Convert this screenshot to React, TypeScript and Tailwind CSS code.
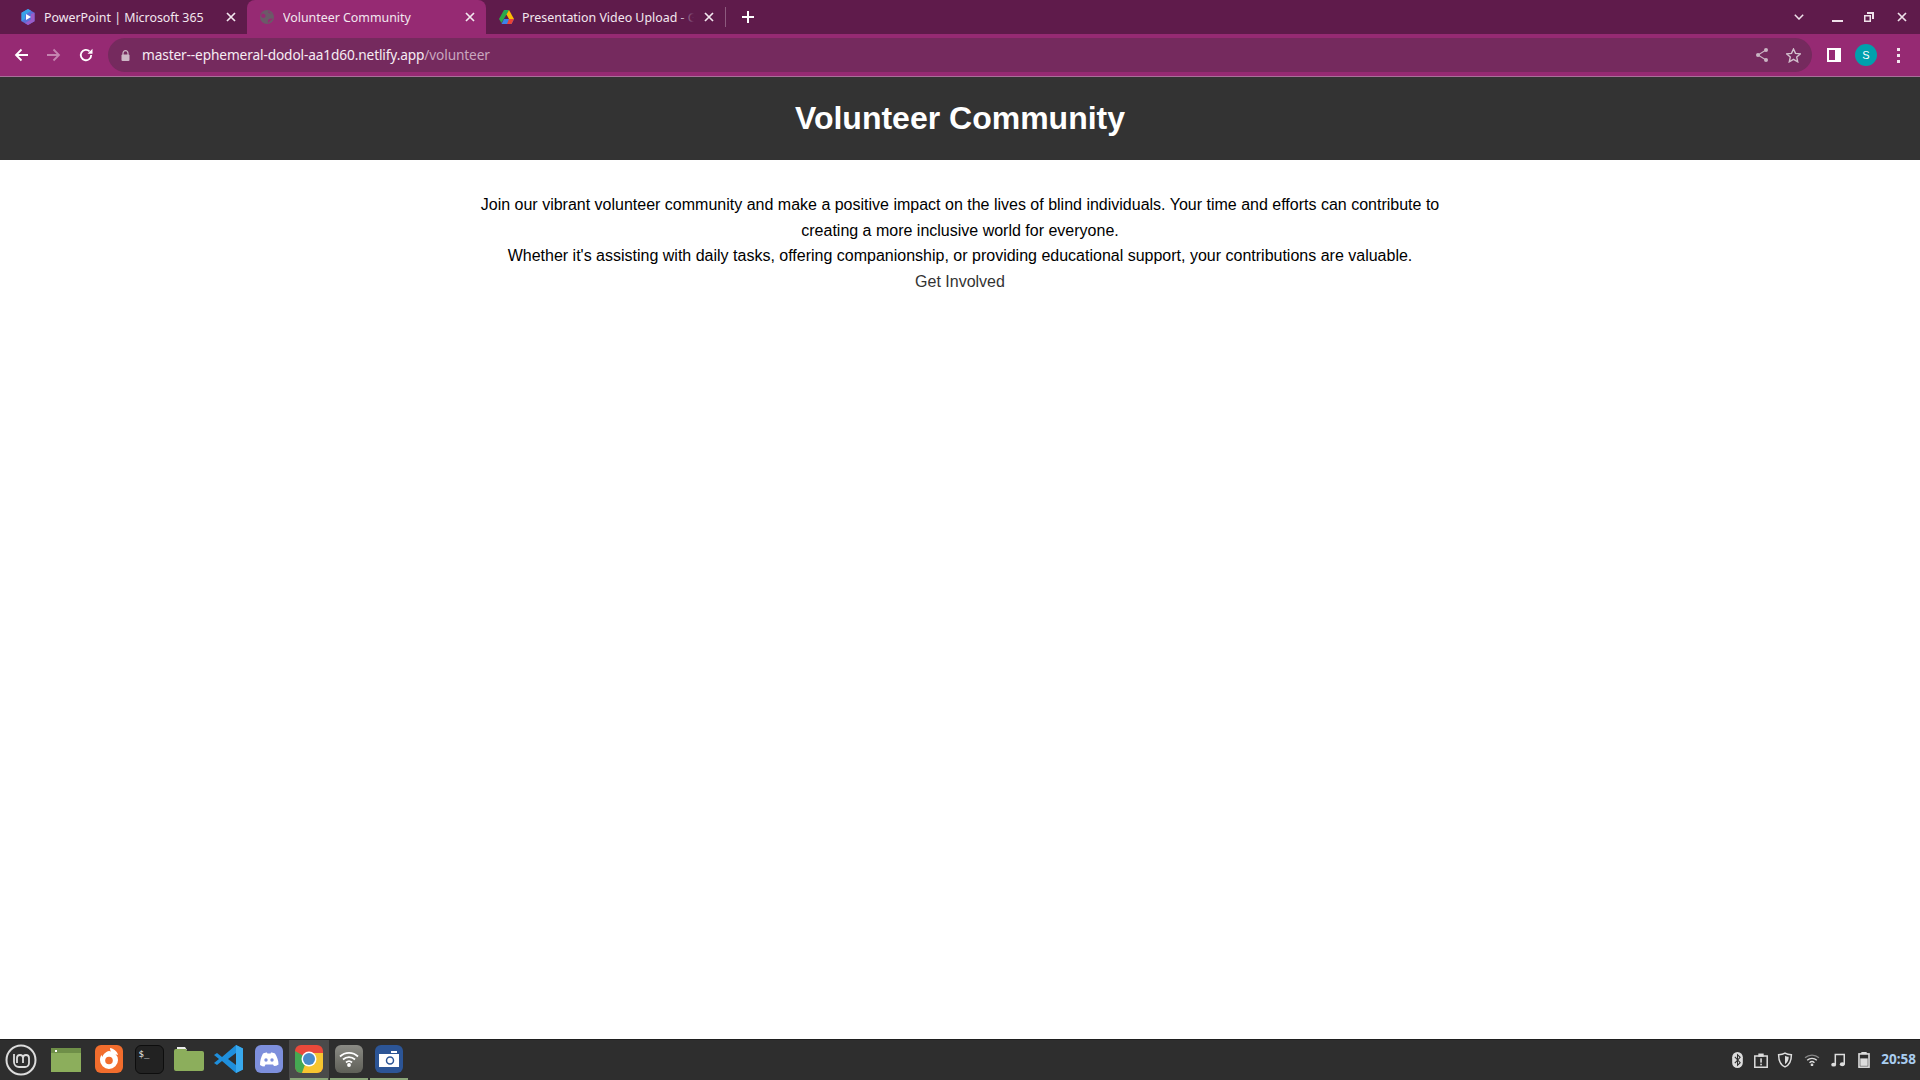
import React from "react";

const X = ({ c = "#f3e7ef" }: { c?: string }) => (
  <svg width="10" height="10" viewBox="0 0 10 10"><path d="M1 1l8 8M9 1l-8 8" stroke={c} strokeWidth="1.7" /></svg>
);

const GlobeFav = () => (
  <svg width="14" height="14" viewBox="0 0 14 14">
    <circle cx="7" cy="7" r="7" fill="#6b5a68" />
    <path d="M2 3.500c2 0 3 .8 3.500 2S4.500 8 3.500 8 1.500 7 1 6M8 1c0 1.500 1 2 2.500 2.500S13 5 13 5M8 13c-.5-2 0-3.500 1.500-4S13 8.500 13 8.500" fill="#962a73" />
  </svg>
);

const M365 = () => (
  <svg width="14" height="16" viewBox="0 0 14 16">
    <path d="M7 0l6.500 3.700v8.600L7 16 .5 12.300V3.700z" fill="#5a6fd8" />
    <path d="M.5 3.700L7 0l3 1.700L4 6v4L.5 12.300z" fill="#38a3e8" />
    <path d="M13.500 3.700v8.600L7 16l-3-2 6-3.500V5z" fill="#9a5cc9" />
    <path d="M5 5l5 3-5 3z" fill="#fff" />
  </svg>
);

const Drive = () => (
  <svg width="15" height="14" viewBox="0 0 15 14">
    <path d="M5 0h5l-2.500 5-2.500-.5z" fill="#1faa5b" />
    <path d="M5 0L0 9l2.500 4 5-8.500z" fill="#2aa84a" />
    <path d="M10 0l5 9h-5L7.500 4.500z" fill="#fbbc04" />
    <path d="M15 9l-2.500 5h-10L5 9z" fill="#3b82e8" />
    <path d="M10 9h5l-2.500 5H8z" fill="#ea4335" />
  </svg>
);

function Tab({ icon, title, active, fade }: { icon: React.ReactNode; title: string; active?: boolean; fade?: boolean }) {
  return (
    <div className={active ? "w-[239px] h-[34px] flex items-center pl-[12px] pr-[11px] rounded-t-[8px] bg-[#962a73]" : "w-[239px] h-[34px] flex items-center pl-[12px] pr-[11px]"}>
      <div className="w-[16px] flex justify-center shrink-0">{icon}</div>
      <div className="ml-[8px] flex-1 overflow-hidden whitespace-nowrap text-[12.4px] leading-[18px] mt-[1px] text-[#f3e7ef] relative">
        {title}
        {fade && <div className="absolute right-0 top-0 bottom-0 w-[16px] bg-gradient-to-r from-transparent to-[#5f1b4b]" />}
      </div>
      <div className="ml-[10px] w-[10px] flex justify-center shrink-0"><X /></div>
    </div>
  );
}

function Toolbar() {
  return (
    <div className="h-[42px] bg-[#962a73] flex items-center relative">
      <div className="w-[108px] flex items-center pl-[14px] gap-[19px] shrink-0">
        <svg width="14" height="14" viewBox="0 0 14 14"><path d="M14 7H2M7.500 1.500L2 7l5.500 5.500" fill="none" stroke="#fff" strokeWidth="1.800" /></svg>
        <svg width="14" height="14" viewBox="0 0 14 14"><path d="M0 7h12M6.500 1.500L12 7l-5.500 5.500" fill="none" stroke="#c584b0" strokeWidth="1.800" /></svg>
        <svg width="14" height="14" viewBox="0 0 14 14" className="ml-[-1px]"><path d="M12.200 7A5.200 5.200 0 1 1 10.600 3.300" fill="none" stroke="#fff" strokeWidth="1.800" /><path d="M13.500 .8v5h-5z" fill="#fff" /></svg>
      </div>
      <div className="w-[1704px] h-[34px] rounded-full bg-[#752a5e] flex items-center pl-[14px] pr-[11px] shrink-0">
        <svg width="9" height="11" viewBox="0 0 9 11" className="mr-[12px] ml-[-1px]">
          <path d="M2 5V3.200a2.500 2.500 0 0 1 5 0V5" fill="none" stroke="#cdb7c6" strokeWidth="1.200" /><rect x="0.500" y="4.500" width="8" height="6.500" rx="1" fill="#cdb7c6" />
        </svg>
        <span className="text-[13.7px] leading-[20px] mt-[-1px] text-[#f6ecf3] font-['Noto_Sans',sans-serif] tracking-[-0.13px]">
          master--ephemeral-dodol-aa1d60.netlify.app<span className="text-[#c9a6bf]">/volunteer</span>
        </span>
        <div className="ml-auto flex items-center gap-[18px]">
          <svg width="12" height="14" viewBox="0 0 12 14"><circle cx="10" cy="2" r="2" fill="#c9b5c3" /><circle cx="2" cy="7" r="2" fill="#c9b5c3" /><circle cx="10" cy="12" r="2" fill="#c9b5c3" /><path d="M10 2L2 7l8 5" fill="none" stroke="#c9b5c3" strokeWidth="1.100" /></svg>
          <svg width="15" height="15" viewBox="0 0 15 15"><path d="M7.500 1l2 4.400 4.800.5-3.600 3.200 1 4.700-4.200-2.400-4.200 2.400 1-4.700L.7 5.900l4.800-.5z" fill="none" stroke="#d2c1cd" strokeWidth="1.400" /></svg>
        </div>
      </div>
      <div className="flex items-center pl-[15px]">
        <div className="w-[14px] h-[14px] bg-white flex justify-start items-center pl-[2px] shrink-0"><div className="w-[6px] h-[10px] bg-[#962a73]" /></div>
        <div className="ml-[14px] w-[22px] h-[22px] rounded-full bg-[#00a0ad] text-white text-[11px] flex items-center justify-center shrink-0">S</div>
        <div className="ml-[20px] flex flex-col gap-[3px]">
          <div className="w-[3px] h-[3px] bg-[#f3e7ef]" /><div className="w-[3px] h-[3px] bg-[#f3e7ef]" /><div className="w-[3px] h-[3px] bg-[#f3e7ef]" />
        </div>
      </div>
    </div>
  );
}

function TabStrip() {
  return (
    <div className="h-[34px] bg-[#5f1b4b] flex items-start font-['Noto_Sans',sans-serif]">
      <div className="ml-[8px] flex">
        <Tab icon={<M365 />} title="PowerPoint | Microsoft 365" />
        <Tab active icon={<GlobeFav />} title="Volunteer Community" />
        <Tab fade icon={<Drive />} title="Presentation Video Upload - Google Drive" />
      </div>
      <div className="w-px h-[20px] bg-[#8d5a7e] mt-[7px]" />
      <svg width="12" height="12" viewBox="0 0 12 12" className="ml-[16px] mt-[11px]"><path d="M6 0v12M0 6h12" stroke="#fff" strokeWidth="2" /></svg>
      <div className="ml-auto flex items-center h-[34px] pr-[13px]">
        <svg width="10" height="6" viewBox="0 0 10 6"><path d="M.8.8L5 5l4.200-4.200" fill="none" stroke="#efe2ea" strokeWidth="1.500" /></svg>
        <div className="w-[11px] h-[2px] bg-[#efe2ea] ml-[28px] mt-[8px]" />
        <svg width="10" height="10" viewBox="0 0 10 10" className="ml-[21px]"><path d="M3 0h7v7H8V2H3zM0 3h7v7H0z" fill="#efe2ea" /><path d="M1.500 4.500h4v4h-4z" fill="#5f1b4b" /></svg>
        <div className="ml-[23px]"><X c="#efe2ea" /></div>
      </div>
    </div>
  );
}

const Dock = ({ active, under, children }: { active?: boolean; under?: boolean; children: React.ReactNode }) => (
  <div className={(active ? "bg-[#4a4a4a] " : "") + "w-[40px] h-[40px] pb-[2px] flex items-center justify-center relative"}>
    {children}
    {under && <div className="absolute bottom-0 left-[1px] right-[1px] h-[2px] bg-[#8aa578]" />}
  </div>
);

function Taskbar() {
  return (
    <div className="h-[41px] bg-[#2e2e2e] border-t border-[#1f1f1f] flex items-center shrink-0">
      <div className="w-[46px] flex justify-center pr-[4px]">
        <svg width="32" height="32" viewBox="0 0 32 32">
          <circle cx="16" cy="16" r="14.500" fill="none" stroke="#dcdcdc" strokeWidth="2" />
          <path d="M9 10v8a5 5 0 0 0 5 5h6a4 4 0 0 0 4-4v-5a3 3 0 0 0-6 0v5M18 14a3 3 0 0 0-6 0v5" fill="none" stroke="#dcdcdc" strokeWidth="1.800" />
        </svg>
      </div>
      <div className="flex items-center">
        <div className="w-[40px] flex justify-center pb-[1px]">
          <div className="w-[30px] h-[24px] bg-[#8cae5c] relative"><div className="h-[5px] bg-[#6f8f48]" /><div className="absolute left-[4px] top-[2px] w-[2px] h-[2px] bg-white" /></div>
        </div>
        <div className="w-[3px]" />
        <Dock>
          <svg width="28" height="28" viewBox="0 0 28 28">
            <rect width="28" height="28" rx="6" fill="#f26d2d" />
            <path d="M14 6a9 9 0 1 1-9 9c0-2 .6-3.600 1.500-5l1 2c.5-2 1.500-3.200 3-4.200C11 7 12.500 6.300 14 6z" fill="#fff" />
            <circle cx="14" cy="15.500" r="3.800" fill="#f26d2d" />
            <path d="M15 3c3.500.5 7 3 8 7l-5.500-1.500C16 7.500 15 5.500 15 3z" fill="#fff" />
          </svg>
        </Dock>
        <Dock>
          <div className="w-[29px] h-[29px] rounded-[6px] bg-[#222] border border-[#0d0d0d] text-[#eee] text-[9px] leading-none font-['DejaVu_Sans_Mono',monospace] pl-[3px] pt-[4px]">$_</div>
        </Dock>
        <Dock>
          <svg width="30" height="24" viewBox="0 0 30 24">
            <path d="M3 0h8l2 3H3z" fill="#eee" /><path d="M0 4a2 2 0 0 1 2-2h10l1 2h15a2 2 0 0 1 2 2v16a2 2 0 0 1-2 2H2a2 2 0 0 1-2-2z" fill="#8cae5c" />
          </svg>
        </Dock>
        <Dock>
          <svg width="30" height="30" viewBox="0 0 30 30">
            <path d="M22 1l7 3.500v21L22 29 8 17l-5 4-3-2 5-4-5-4 3-2 5 4z" fill="#1f8fdc" />
            <path d="M22 1v28l7-3.500v-21z" fill="#38a9ee" /><path d="M22 9l-8 6 8 6z" fill="#2e2e2e" />
          </svg>
        </Dock>
        <Dock>
          <div className="w-[28px] h-[28px] rounded-[6px] bg-[#7d8fdc] flex items-center justify-center">
            <svg width="20" height="15" viewBox="0 0 20 15">
              <path d="M4 1.500C6 .6 7 .5 8 .5l.4 1h3.200l.4-1c1 0 2 .1 4 1 2 3 3.500 7 3.500 11-1.500 1-3 1.500-4.500 1.500l-1-1.500H6.500L5.500 14.500C4 14.500 2.500 14 1 13c0-4 1-8 3-11.500z" fill="#fff" />
              <circle cx="7" cy="8" r="1.700" fill="#7d8fdc" /><circle cx="13" cy="8" r="1.700" fill="#7d8fdc" />
            </svg>
          </div>
        </Dock>
        <div className="flex">
          <Dock active under>
            <svg width="28" height="28" viewBox="0 0 28 28">
              <defs><clipPath id="chromeClip"><rect width="28" height="28" rx="6" /></clipPath></defs>
              <g clipPath="url(#chromeClip)">
                <rect width="28" height="28" fill="#e9493a" /><path d="M0 6l14 8-7 14H0z" fill="#45a852" /><path d="M14 8h14v20H7z" fill="#f7c530" />
              </g>
              <circle cx="14" cy="14" r="7.500" fill="#fff" /><circle cx="14" cy="14" r="6" fill="#4a8bc9" />
            </svg>
          </Dock>
          <Dock under>
            <div className="w-[28px] h-[28px] rounded-[6px] bg-gradient-to-b from-[#8b8b85] to-[#5f6058] flex items-center justify-center">
              <svg width="20" height="16" viewBox="0 0 20 16" fill="none" stroke="#fff" strokeWidth="1.800"><path d="M1 5.500a13 13 0 0 1 18 0M4 8.500a9 9 0 0 1 12 0M7 11.500a4.500 4.500 0 0 1 6 0" /><circle cx="10" cy="14" r="1" fill="#fff" /></svg>
            </div>
          </Dock>
          <Dock under>
            <div className="w-[28px] h-[28px] rounded-[6px] bg-[#2c5596] flex items-center justify-center">
              <svg width="20" height="16" viewBox="0 0 20 16"><path d="M0 3h20v13H0zM12 0h6v2h-6z" fill="#fff" /><circle cx="11" cy="9.500" r="3.500" fill="none" stroke="#2c5596" strokeWidth="1.500" /></svg>
            </div>
          </Dock>
        </div>
      </div>
      <div className="ml-auto flex items-center pr-[4px]">
        <svg width="11" height="16" viewBox="0 0 10 15"><rect width="10" height="15" rx="5" fill="#ddd" /><path d="M2.500 4.500l5 5.500L5 12.500V2.500L7.500 5l-5 5.500" fill="none" stroke="#2e2e2e" strokeWidth="1" /></svg>
        <svg width="14" height="15" viewBox="0 0 13 14" className="ml-[11px]"><path d="M.7 2.700h11.600v10.600H.7z" fill="none" stroke="#ddd" strokeWidth="1.400" /><rect x="4" y="0.500" width="5" height="3" fill="#ddd" /><rect x="5.800" y="5" width="1.500" height="4" fill="#ddd" /><rect x="5.800" y="10" width="1.500" height="1.500" fill="#ddd" /></svg>
        <svg width="16" height="16" viewBox="0 0 15 15" className="ml-[9px]"><path d="M7.500 1c2 1.300 4 1.500 6 1.500 0 5-1.500 9.500-6 11.500-4.500-2-6-6.500-6-11.500 2 0 4-.2 6-1.500z" fill="none" stroke="#ddd" strokeWidth="1.400" /><path d="M7.500 3.500c1 .6 2.500 1 3.500 1 0 3-1 5.500-3.500 7z" fill="#ddd" /></svg>
        <svg width="16" height="12" viewBox="0 0 15 11" fill="none" stroke="#ddd" className="ml-[11px]"><path d="M1 3.500a9.500 9.500 0 0 1 13 0" strokeWidth="1.300" opacity=".5" /><path d="M3 5.800a6.500 6.500 0 0 1 9 0M5.200 8a3.300 3.300 0 0 1 4.600 0" strokeWidth="1.300" /><circle cx="7.500" cy="10" r=".8" fill="#ddd" /></svg>
        <svg width="14" height="14" viewBox="0 0 13 13" className="ml-[11px]"><path d="M4 10.500V1.500h8.300v9" fill="none" stroke="#ddd" strokeWidth="1.400" /><ellipse cx="2.500" cy="10.800" rx="2.300" ry="1.800" fill="#ddd" /><ellipse cx="10.500" cy="10.500" rx="2.300" ry="1.800" fill="#ddd" /></svg>
        <svg width="12" height="16" viewBox="0 0 11 15" className="ml-[13px]"><rect x="3" width="5" height="2" fill="#ddd" /><rect x=".8" y="1.800" width="9.400" height="12.400" fill="none" stroke="#ddd" strokeWidth="1.500" /><rect x="2" y="6" width="7" height="7" fill="#ddd" /></svg>
        <span className="ml-[11px] text-[13.5px] font-bold text-[#a9cdf0] font-['Noto_Sans',sans-serif] leading-none">20:58</span>
      </div>
    </div>
  );
}

export default function App() {
  return (
    <div className="h-screen flex flex-col bg-white overflow-hidden font-['Liberation_Sans',sans-serif]">
      <TabStrip />
      <Toolbar />
      <div className="h-px bg-[#a9709a]" />
      <header className="h-[83px] pb-[2px] bg-[#333] flex items-center justify-center shrink-0">
        <h1 className="text-[32px] font-bold text-white leading-none">Volunteer Community</h1>
      </header>
      <main className="flex-1 pt-[32px] text-center text-[16px] leading-[25.6px] text-black">
        <p className="w-[960px] mx-auto">
          Join our vibrant volunteer community and make a positive impact on the lives of blind individuals. Your time and efforts can contribute to creating a more inclusive world for everyone.
        </p>
        <p>Whether it's assisting with daily tasks, offering companionship, or providing educational support, your contributions are valuable.</p>
        <a className="text-[#333]">Get Involved</a>
      </main>
      <Taskbar />
    </div>
  );
}
